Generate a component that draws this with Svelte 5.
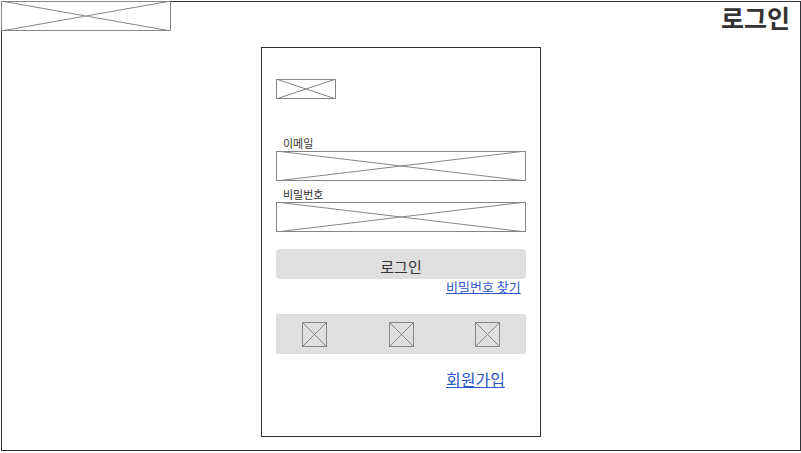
<script>
  let email = $state('');
  let password = $state('');
  const providers = ['소셜 로그인 1', '소셜 로그인 2', '소셜 로그인 3'];
</script>

{#snippet cross()}
  <svg class="cross" viewBox="0 0 100 100" preserveAspectRatio="none" aria-hidden="true">
    <path d="M0 0 100 100M100 0 0 100" />
  </svg>
{/snippet}

<div class="frame">
  <header>
    <div class="box logo">{@render cross()}</div>
    <h1>로그인</h1>
  </header>

  <main>
    <div class="box brand">{@render cross()}</div>

    <form onsubmit={(e) => e.preventDefault()}>
      <label for="email">이메일</label>
      <div class="box field">
        {@render cross()}
        <input id="email" type="email" bind:value={email} />
      </div>
      <label for="password">비밀번호</label>
      <div class="box field">
        {@render cross()}
        <input id="password" type="password" bind:value={password} />
      </div>
      <button class="submit" type="submit">로그인</button>
    </form>

    <a class="find" href="#find">비밀번호 찾기</a>

    <div class="social">
      {#each providers as name}
        <button class="box provider" type="button" aria-label={name}>{@render cross()}</button>
      {/each}
    </div>

    <a class="join" href="#join">회원가입</a>
  </main>
</div>

<style>
  :global(body) {
    background: #fff;
  }

  .frame,
  .frame * {
    box-sizing: border-box;
  }

  .frame {
    margin: 1px 0 0 1px;
    padding-bottom: 13px;
    border: 1px solid #303134;
    color: #333;
    font-family: 'Noto Sans CJK KR', sans-serif;
  }

  header {
    display: flex;
    justify-content: space-between;
    align-items: flex-start;
    min-height: 45px;
    padding-right: 10px;
  }

  h1 {
    margin: 0;
    font-size: 25px;
    line-height: 30px;
    font-weight: 700;
  }

  .box {
    position: relative;
    border: 1px solid #858585;
  }

  .cross {
    position: absolute;
    top: -1px;
    left: -1px;
    display: block;
    width: calc(100% + 2px);
    height: calc(100% + 2px);
  }

  .cross path {
    fill: none;
    stroke: #858585;
    stroke-width: 1px;
    vector-effect: non-scaling-stroke;
  }

  .logo {
    width: 170px;
    height: 30px;
    margin: -1px 0 0 -1px;
    background: #fff;
  }

  main {
    display: flex;
    flex-direction: column;
    width: 280px;
    max-width: 100%;
    margin: 0 auto;
    padding: 31px 14px 46px;
    border: 1px solid #303134;
  }

  .brand {
    width: 60px;
    height: 20px;
    margin-bottom: 38px;
  }

  form {
    display: flex;
    flex-direction: column;
  }

  label {
    padding: 0 0 2px 7px;
    font-size: 11px;
    line-height: 12px;
  }

  .field {
    height: 30px;
    margin-bottom: 7px;
  }

  input {
    position: relative;
    display: block;
    width: 100%;
    height: 100%;
    padding: 0 8px;
    border: 0;
    background: transparent;
    font: inherit;
    font-size: 13px;
  }

  .submit {
    height: 30px;
    margin-top: 10px;
    padding: 6px 0 0;
    border: 0;
    border-radius: 4px;
    background: #dfdfdf;
    color: #333;
    font-family: inherit;
    font-size: 15px;
    line-height: 24px;
  }

  a {
    align-self: flex-start;
    margin-left: 170px;
    color: #2c56c8;
    white-space: nowrap;
    text-decoration: underline;
  }

  .find {
    font-size: 13px;
    line-height: 16px;
  }

  .social {
    display: flex;
    justify-content: space-between;
    align-items: center;
    height: 40px;
    margin: 19px 0 14px;
    padding: 0 26px;
    background: #dfdfdf;
  }

  .provider {
    width: 25px;
    height: 25px;
    padding: 0;
    background: transparent;
  }

  .join {
    font-size: 16px;
    line-height: 22px;
  }
</style>
